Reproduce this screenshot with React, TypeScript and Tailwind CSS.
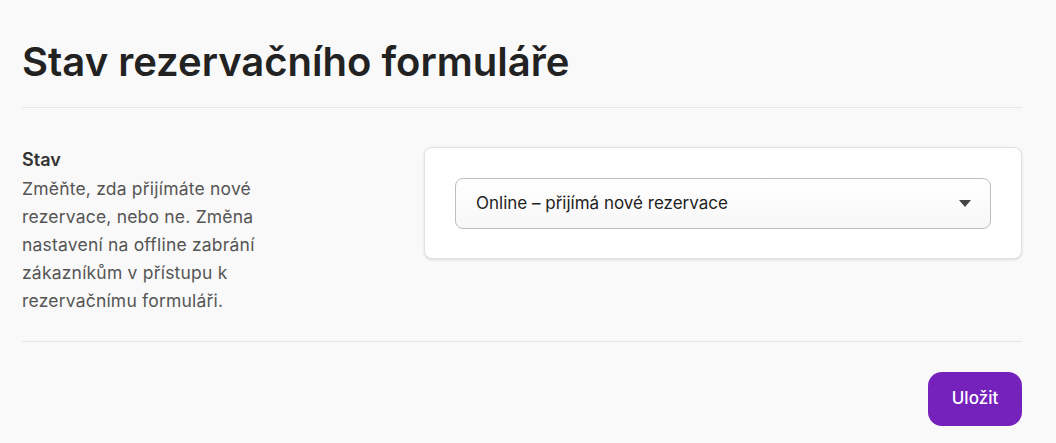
const App = () => {
  return (
    <main
      className="min-h-[443px] bg-[#f9f9f9] px-[22px] pt-[38px]"
      style={{ fontFamily: "Inter, 'Noto Sans', sans-serif" }}
    >
      <div className="w-[1000px]">
        <h1 className="text-[40px] leading-[48px] font-semibold text-[#222]">
          Stav rezervačního formuláře
        </h1>

        <div className="mt-[21px] border-t border-[#e6e6e6]" />

        <div className="flex justify-between pt-[39px] pb-[26px]">
          <div className="w-[290px]">
            <h2 className="text-[18px] leading-[26px] font-semibold text-[#333]">Stav</h2>
            <p className="mt-[2px] text-[17.5px] leading-[28px] tracking-[0.2px] text-[#555]">
              Změňte, zda přijímáte nové rezervace, nebo ne. Změna nastavení na offline zabrání
              zákazníkům v přístupu k rezervačnímu formuláři.
            </p>
          </div>

          <div className="w-[598px] h-[112px] rounded-lg border border-[#e2e2e2] bg-white px-[30px] pt-[30px] shadow-sm">
            <div className="flex h-[51px] items-center justify-between rounded-lg border border-[#bdbdbd] bg-gradient-to-b from-white to-[#f7f7f7] pl-[20px] pr-[19px]">
              <span className="text-[17px] text-[#222]">Online – přijímá nové rezervace</span>
              <svg width="12" height="7" viewBox="0 0 12 7">
                <path d="M0 0h12L6 7z" fill="#444" />
              </svg>
            </div>
          </div>
        </div>

        <div className="border-t border-[#e6e6e6]" />

        <div className="flex justify-end pt-[30px]">
          <button className="h-[54px] w-[94px] rounded-[14px] bg-[#7522bd] text-[17px] font-medium text-white">
            Uložit
          </button>
        </div>
      </div>
    </main>
  );
};

export default App;
